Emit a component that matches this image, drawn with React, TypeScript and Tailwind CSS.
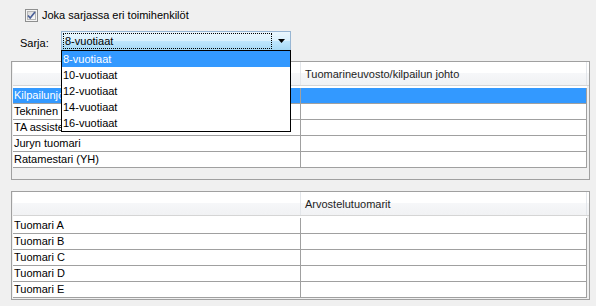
import React from "react";

const FONT = "font-['Liberation_Sans',Arial,sans-serif]";

const SERIES = ["8-vuotiaat", "10-vuotiaat", "12-vuotiaat", "14-vuotiaat", "16-vuotiaat"];

const OFFICIALS = [
  "Kilpailunjohtaja",
  "Tekninen asiantuntija",
  "TA assistentti",
  "Juryn tuomari",
  "Ratamestari (YH)",
];

const JUDGES = ["Tuomari A", "Tuomari B", "Tuomari C", "Tuomari D", "Tuomari E"];

function CheckBox() {
  return (
    <svg width="13" height="13" viewBox="0 0 13 13" className="shrink-0">
      <defs>
        <linearGradient id="cbFill" x1="0" y1="0" x2="1" y2="1">
          <stop offset="0%" stopColor="#d6d6d6" />
          <stop offset="100%" stopColor="#ffffff" />
        </linearGradient>
      </defs>
      <rect x="0.5" y="0.5" width="12" height="12" fill="#f4f4f4" stroke="#8e8f8f" />
      <rect x="2.5" y="2.5" width="8" height="8" fill="url(#cbFill)" stroke="#b5b5b5" />
      <path d="M3 6.5 L5.2 9 L10 3" fill="none" stroke="#4a5f97" strokeWidth="1.7" />
    </svg>
  );
}

function Header({ title }: { title: string }) {
  return (
    <div className="flex h-[24px] border-b border-[#d5d5d5] bg-[linear-gradient(to_bottom,#ffffff_0%,#ffffff_46%,#f6f7f9_47%,#f1f2f4_100%)]">
      <div className="w-[288px] border-r border-[#e3e6ea]" />
      <div className="w-[286px] border-r border-[#e3e6ea] pl-[4px] pt-[6px] leading-[13px] text-[#1e1e1e]">
        {title}
      </div>
    </div>
  );
}

function Rows({ names, selected }: { names: string[]; selected?: number }) {
  return (
    <div>
      {names.map((n, i) => (
        <div key={n} className="flex h-[16px]">
          <div
            className={
              "w-[288px] border-r border-b border-[#a0a0a0] pl-[1px] leading-[15px] whitespace-nowrap overflow-hidden " +
              (i === selected ? "bg-[#3399ff] text-white" : "bg-white text-black")
            }
          >
            {n}
          </div>
          <div
            className={
              "w-[286px] border-r border-b border-[#a0a0a0] " +
              (i === selected ? "bg-[#3399ff]" : "bg-white")
            }
          />
        </div>
      ))}
    </div>
  );
}

export default function App() {
  return (
    <div className={`relative w-[596px] h-[306px] bg-[#f0f0f0] text-[11px] text-black ${FONT}`}>
      {/* checkbox */}
      <div className="flex items-center pt-[9px] pl-[25px] h-[22px]">
        <CheckBox />
        <span className="ml-[4px] leading-[13px]">Joka sarjassa eri toimihenkilöt</span>
      </div>

      {/* series combo */}
      <div className="flex mt-[9px] pl-[20px] h-[20px]">
        <div className="w-[41px] pt-[6px] leading-[13px]">Sarja:</div>
        <div className="relative w-[230px] h-[20px]">
          <div className="flex h-full border border-[#98b6d3] bg-[linear-gradient(to_bottom,#eaf6fd_0%,#d9f0fc_50%,#bee6fd_51%,#a7d9f5_100%)]">
            <div className="flex-1 m-[1px] border border-dotted border-black pl-[1px] leading-[14px]">
              8-vuotiaat
            </div>
            <div className="w-[17px] flex items-center justify-center">
              <svg width="8" height="5" viewBox="0 0 8 5">
                <path d="M0 0 H7 L3.5 4 Z" fill="#000" />
              </svg>
            </div>
          </div>

          {/* open dropdown list */}
          <div className="absolute left-0 top-[19px] w-[230px] h-[82px] border border-black bg-white z-10">
            {SERIES.map((s, i) => (
              <div
                key={s}
                className={
                  "h-[16px] pl-[1px] leading-[16px] " +
                  (i === 0 ? "bg-[#3399ff] text-white" : "text-black")
                }
              >
                {s}
              </div>
            ))}
          </div>
        </div>
      </div>

      {/* officials table */}
      <div className="mt-[10px] ml-[11px] w-[579px] h-[119px] border border-[#a0a0a0] pl-[1px]">
        <Header title="Tuomarineuvosto/kilpailun johto" />
        <div className="h-[2px] w-[574px] bg-white" />
        <Rows names={OFFICIALS} selected={0} />
      </div>

      {/* judges table */}
      <div className="mt-[11px] ml-[11px] w-[579px] h-[109px] border border-[#a0a0a0] pl-[1px]">
        <Header title="Arvostelutuomarit" />
        <div className="h-[2px] w-[574px] bg-white" />
        <Rows names={JUDGES} />
      </div>
    </div>
  );
}
